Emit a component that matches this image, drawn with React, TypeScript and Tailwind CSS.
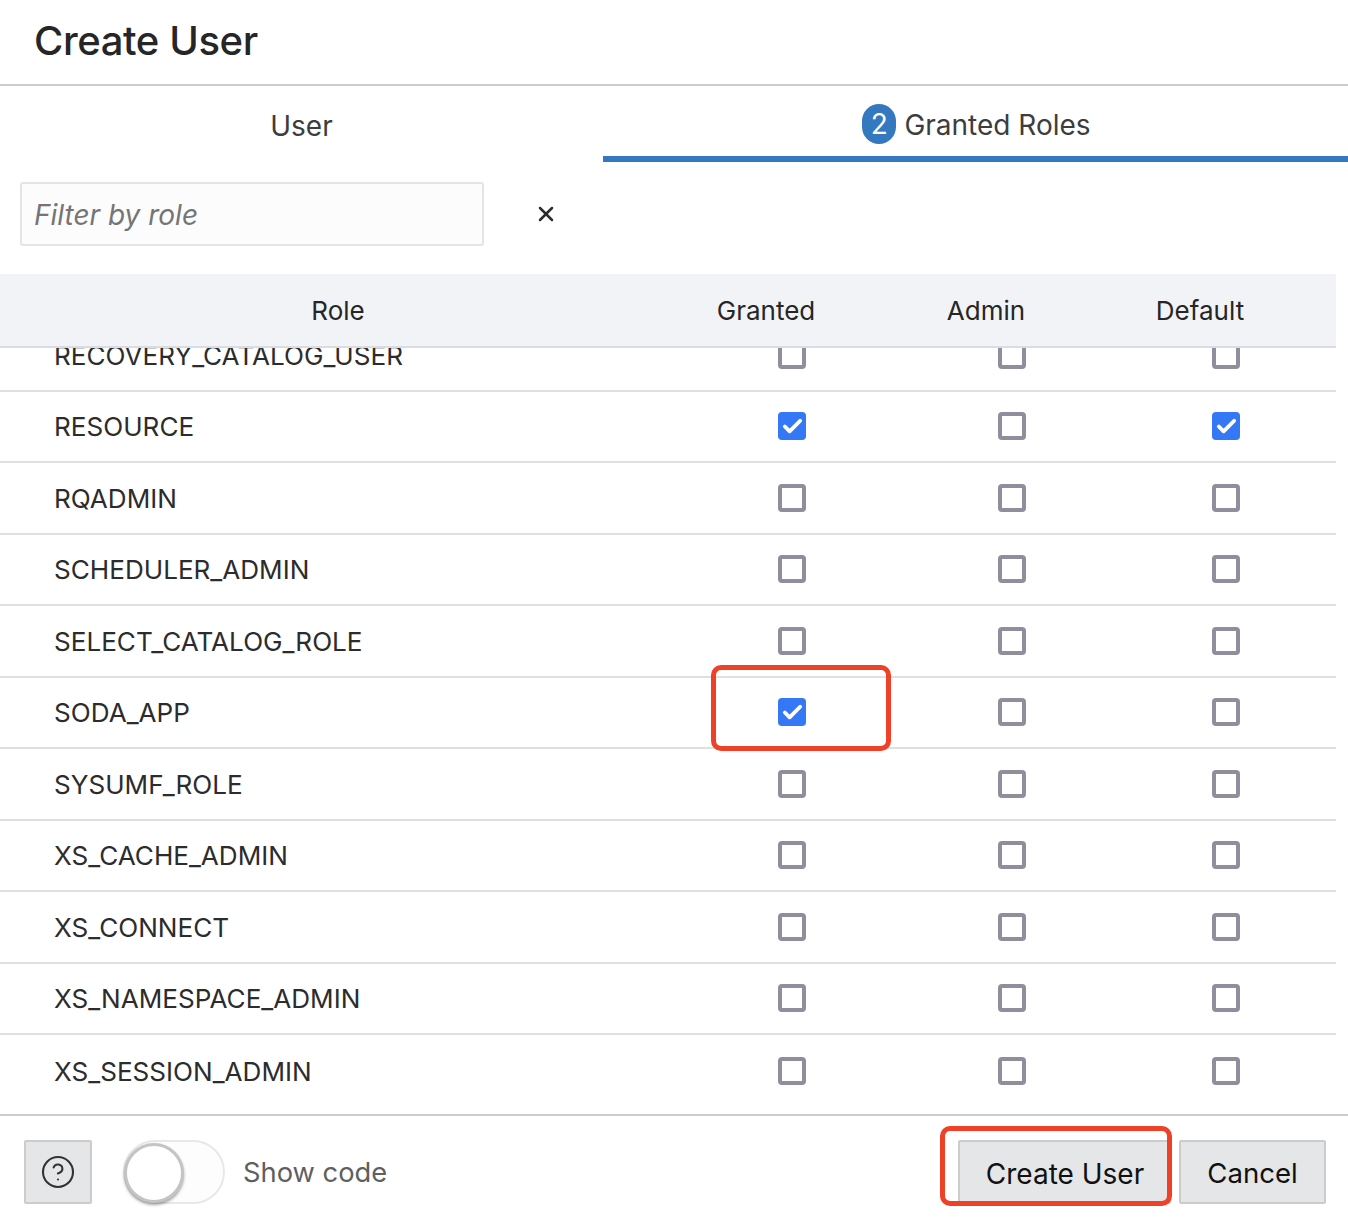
import React from 'react';
import { Check, X, CircleHelp } from 'lucide-react';

const roles = [
  { name: 'RECOVERY_CATALOG_USER', granted: false, def: false },
  { name: 'RESOURCE', granted: true, def: true },
  { name: 'RQADMIN', granted: false, def: false },
  { name: 'SCHEDULER_ADMIN', granted: false, def: false },
  { name: 'SELECT_CATALOG_ROLE', granted: false, def: false },
  { name: 'SODA_APP', granted: true, def: false },
  { name: 'SYSUMF_ROLE', granted: false, def: false },
  { name: 'XS_CACHE_ADMIN', granted: false, def: false },
  { name: 'XS_CONNECT', granted: false, def: false },
  { name: 'XS_NAMESPACE_ADMIN', granted: false, def: false },
  { name: 'XS_SESSION_ADMIN', granted: false, def: false },
];

const Box: React.FC<{ checked?: boolean }> = ({ checked }) =>
  checked ? (
    <span className="flex h-[28px] w-[28px] items-center justify-center rounded-[4px] bg-[#3478f6]">
      <Check size={23} strokeWidth={4} className="text-white" />
    </span>
  ) : (
    <span className="block h-[28px] w-[28px] rounded-[4px] border-4 border-[#8e8e9c] bg-white" />
  );

export default function App() {
  return (
    <div className="relative h-[1228px] w-[1348px] overflow-hidden bg-white font-['Inter',sans-serif] text-[#2c2c2c]">
      {/* Title */}
      <div className="flex h-[86px] items-center border-b-2 border-[#cccccc] pb-[2px] pl-[34px]">
        <h1 className="text-[40px] font-medium tracking-[-0.4px] text-[#262626]">Create User</h1>
      </div>

      {/* Tabs */}
      <div className="flex h-[76px]">
        <div className="flex w-[603px] items-center justify-center pt-[3px] text-[28px] text-[#3d3d3d]">User</div>
        <div className="flex flex-1 items-center justify-center gap-[8px] border-b-[6px] border-[#3478c0] pt-[5px] pl-[2px] text-[28px] text-[#3d3d3d]">
          <span className="flex h-[40px] w-[34px] items-center justify-center rounded-full bg-[#3478c0] text-[28px] text-white">2</span>
          <span className="pt-[3px]">Granted Roles</span>
        </div>
      </div>

      {/* Filter */}
      <div className="flex h-[112px] items-start pt-[20px] pl-[20px]">
        <div className="flex h-[64px] w-[464px] items-center rounded-[3px] border-2 border-[#e4e4e4] bg-[#fcfcfc] pt-[1px] pl-[12px] text-[28px] text-[#757575] italic">
          Filter by role
        </div>
        <X size={24} strokeWidth={2.5} className="mt-[20px] ml-[50px] text-[#2c2c2c]" />
      </div>

      {/* Table header */}
      <div className="grid h-[74px] w-[1336px] grid-cols-[676px_180px_260px_168px_52px] items-center border-b-2 border-[#d9dce3] bg-[#f2f3f7] pt-[1px] text-center text-[26px] text-[#262626]">
        <span>Role</span>
        <span>Granted</span>
        <span>Admin</span>
        <span>Default</span>
      </div>

      {/* Rows, list is scrolled so the first one is cut off */}
      <div className="h-[766px] w-[1336px] overflow-hidden">
        <div className="mt-[-28px]">
          {roles.map(r => (
            <div
              key={r.name}
              className="grid h-[71.5px] grid-cols-[702px_180px_260px_168px_26px] items-center border-b-2 border-[#e0e0e0] text-[26.1px] text-[#2c2c2c] last:border-b-0"
            >
              <span className="pt-[1px] pl-[54px]">{r.name}</span>
              <span className="flex justify-center"><Box checked={r.granted} /></span>
              <span className="flex justify-center"><Box /></span>
              <span className="flex justify-center"><Box checked={r.def} /></span>
            </div>
          ))}
        </div>
      </div>

      {/* Footer */}
      <div className="flex h-[114px] items-start justify-between border-t-2 border-[#cccccc] pt-[24px] pr-[22px] pl-[24px]">
        <div className="flex items-center">
          <button className="flex h-[64px] w-[68px] items-center justify-center rounded-[2px] border-2 border-[#cccccc] bg-[#e4e6e8]">
            <CircleHelp size={36} strokeWidth={1.4} className="text-[#333333]" />
          </button>
          <div className="relative ml-[31px] h-[64px] w-[102px] rounded-full border-2 border-[#e8e8e8] bg-[#fdfdfd]">
            <span className="absolute top-[1px] left-[-1px] block h-[60px] w-[60px] rounded-full border-[3px] border-[#c4c4c4] bg-white shadow-[0_2px_3px_rgba(0,0,0,0.35)]" />
          </div>
          <span className="ml-[18px] pt-[2px] text-[27.3px] text-[#5f5f5f]">Show code</span>
        </div>
        <div className="flex gap-[8px]">
          <button className="h-[64px] w-[213px] rounded-[2px] border-2 border-[#cccccc] bg-[#e4e6e8] pt-[3px] pl-[1px] text-[28px] text-[#111111]">Create User</button>
          <button className="h-[64px] w-[147px] rounded-[2px] border-2 border-[#cccccc] bg-[#e4e6e8] pt-[3px] text-[27.6px] text-[#111111]">Cancel</button>
        </div>
      </div>

      {/* Red annotation frames */}
      <div className="absolute top-[665px] left-[711px] h-[86px] w-[180px] rounded-[10px] border-[5px] border-[#ee4128]" />
      <div className="absolute top-[1126px] left-[940px] h-[80px] w-[232px] rounded-[10px] border-[5px] border-[#ee4128]" />
    </div>
  );
}
